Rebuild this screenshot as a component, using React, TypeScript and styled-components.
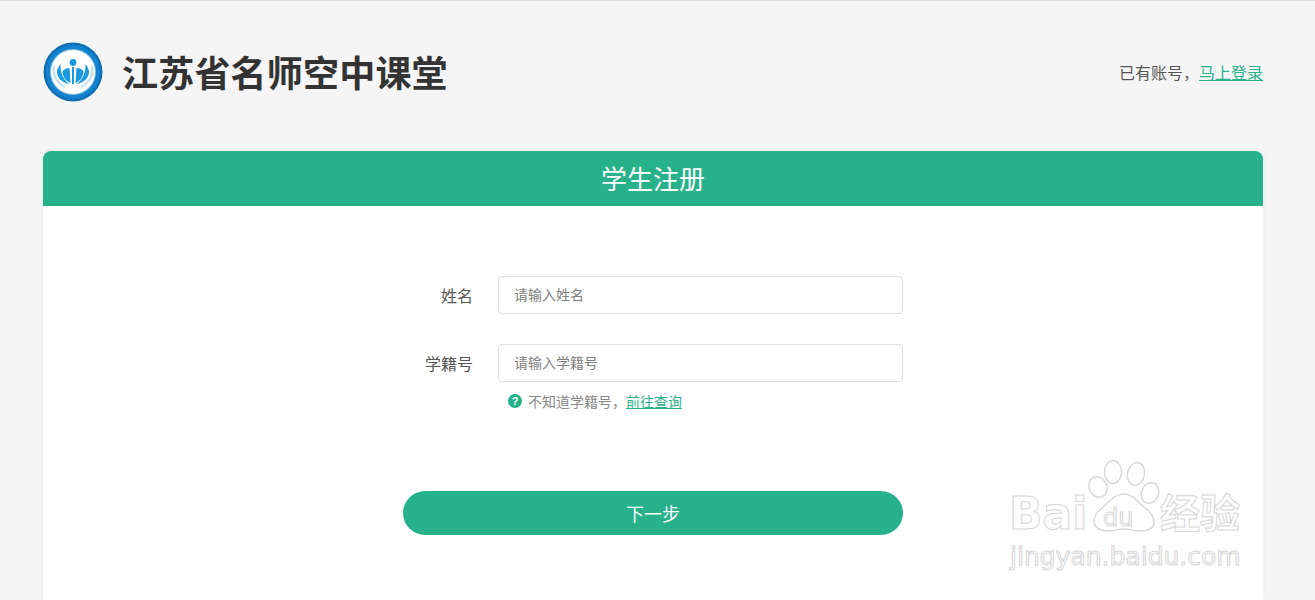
import styled, { createGlobalStyle } from 'styled-components';

const GlobalStyle = createGlobalStyle`
  html, body {
    margin: 0;
    padding: 0;
    height: 600px;
    overflow: hidden;
    background: #f5f5f5;
  }
  * {
    box-sizing: border-box;
  }
  body {
    font-family: "Liberation Sans", "Noto Sans CJK SC", sans-serif;
    color: #555;
  }
`;

const Page = styled.div`
  position: relative;
  height: 600px;
  padding: 0 52px 0 43px;
  border-top: 1px solid #dcdcdc;
  overflow: hidden;
`;

const Top = styled.header`
  display: flex;
  align-items: center;
  justify-content: space-between;
  height: 150px;
  padding-bottom: 6px;
`;

const Brand = styled.div`
  display: flex;
  align-items: center;
  gap: 19px;
`;

const LogoMark = styled.svg`
  margin-top: -2px;
`;

const BrandName = styled.h1`
  margin: 0;
  padding-top: 3px;
  font-size: 36px;
  line-height: 50px;
  letter-spacing: 0.2px;
  font-weight: 700;
  color: #333;
`;

const LoginTip = styled.div`
  font-size: 16px;
  color: #555;
  padding-bottom: 3px;
`;

const GreenLink = styled.a`
  color: #28b28b;
  text-decoration: underline;
`;

const Card = styled.main`
  background: #fff;
  height: 449px;
  border-radius: 8px 8px 0 0;
  box-shadow: 0 0 4px rgba(0, 0, 0, 0.06);
`;

const CardTitle = styled.h2`
  margin: 0;
  height: 55px;
  line-height: 59px;
  text-align: center;
  font-size: 26px;
  font-weight: 400;
  color: #fff;
  background: #28b28b;
  border-radius: 8px 8px 0 0;
`;

const Form = styled.form`
  width: 500px;
  margin: 70px auto 0 360px;
  display: flex;
  flex-direction: column;
`;

const Row = styled.div`
  display: flex;
  align-items: center;
  gap: 25px;
  margin-bottom: 30px;
`;

const Label = styled.label`
  width: 70px;
  text-align: right;
  font-size: 16px;
  color: #555;
`;

const Input = styled.input`
  width: 405px;
  height: 38px;
  padding: 0 15px;
  border: 1px solid #dcdfe6;
  border-radius: 4px;
  background: #fff;
  font-family: inherit;
  font-size: 14px;
  outline: none;

  &::placeholder {
    color: #808080;
    opacity: 1;
  }
`;

const Hint = styled.div`
  display: flex;
  align-items: center;
  gap: 6px;
  margin: -21px 0 0 105px;
  height: 20px;
  font-size: 14px;
  color: #888;
`;

const HelpDot = styled.span`
  width: 14px;
  height: 14px;
  border-radius: 50%;
  background: #28b28b;
  color: #fff;
  font-size: 11px;
  font-weight: 700;
  line-height: 14px;
  text-align: center;
`;

const NextButton = styled.button`
  width: 500px;
  height: 44px;
  margin-top: 80px;
  border: none;
  border-radius: 22px;
  background: #28b28b;
  color: #fff;
  font-family: inherit;
  font-size: 18px;
`;

const Watermark = styled.div`
  position: absolute;
  left: 1008px;
  top: 459px;
  width: 240px;
  height: 112px;
  pointer-events: none;
`;

const MarkWord = styled.span<{ $left: number; $top: number; $size: number; $bold?: boolean }>`
  position: absolute;
  left: ${(p) => p.$left}px;
  top: ${(p) => p.$top}px;
  font-family: "DejaVu Sans", "Noto Sans CJK SC", sans-serif;
  font-size: ${(p) => p.$size}px;
  line-height: 1;
  font-weight: ${(p) => (p.$bold ? 700 : 400)};
  white-space: nowrap;
  color: #fff;
  -webkit-text-stroke: 1px #d6d6d6;
`;

const PawIcon = styled.svg`
  position: absolute;
  left: 72px;
  top: 0;
`;

function Logo() {
  return (
    <LogoMark width="60" height="60" viewBox="0 0 60 60">
      <circle cx="30" cy="30" r="29.5" fill="#0f6fb5" />
      <circle cx="30" cy="30" r="27" fill="#1483cf" />
      <circle cx="30" cy="30" r="23" fill="#8cc6ea" />
      <circle cx="30" cy="30" r="22" fill="#fff" />
      <path d="M11 24c-2 9 3 17 11 21M49 24c2 9-3 17-11 21" fill="none" stroke="#bfdff3" strokeWidth="2" />
      <circle cx="30" cy="20.500" r="3.400" fill="#1a9be0" />
      <path d="M29 25h2v17h-2z" fill="#1a9be0" />
      <path d="M27.500 41c-.5-5-.5-11-1-15-3 0-5 1-7 3 0 5 3 10 8 12z" fill="#1a9be0" />
      <path d="M32.500 41c.5-5 .5-11 1-15 3 0 5 1 7 3 0 5-3 10-8 12z" fill="#1a9be0" />
      <path d="M17.500 22c-2 3-3.500 5-3.500 8 0 6 6 11 12 12-5-4-9-11-8.500-20z" fill="#1a9be0" />
      <path d="M42.500 22c2 3 3.500 5 3.500 8 0 6-6 11-12 12 5-4 9-11 8.500-20z" fill="#1a9be0" />
    </LogoMark>
  );
}

function Paw() {
  return (
    <PawIcon width="92" height="76" viewBox="0 0 92 76" fill="#fff" stroke="#d6d6d6" strokeWidth="1.4">
      <ellipse cx="18" cy="27" rx="9" ry="10.500" transform="rotate(-25 18 27)" />
      <ellipse cx="33" cy="12" rx="8.500" ry="11.500" />
      <ellipse cx="56" cy="14" rx="8.500" ry="11.500" transform="rotate(12 56 14)" />
      <ellipse cx="70" cy="33" rx="8.500" ry="10.500" transform="rotate(20 70 33)" />
      <path d="M44 34c9 0 13 8 21 14 11 8 15 23-6 23-6 0-10-2-15-2s-9 2-15 2c-19 0-18-14-7-23 8-6 12-14 22-14z" />
    </PawIcon>
  );
}

export default function App() {
  return (
    <>
      <GlobalStyle />
      <Page>
        <Top>
          <Brand>
            <Logo />
            <BrandName>江苏省名师空中课堂</BrandName>
          </Brand>
          <LoginTip>
            已有账号，<GreenLink href="#">马上登录</GreenLink>
          </LoginTip>
        </Top>
        <Card>
          <CardTitle>学生注册</CardTitle>
          <Form>
            <Row>
              <Label>姓名</Label>
              <Input placeholder="请输入姓名" />
            </Row>
            <Row>
              <Label>学籍号</Label>
              <Input placeholder="请输入学籍号" />
            </Row>
            <Hint>
              <HelpDot>?</HelpDot>
              <span>
                不知道学籍号，<GreenLink href="#">前往查询</GreenLink>
              </span>
            </Hint>
            <NextButton type="button">下一步</NextButton>
          </Form>
        </Card>
        <Watermark>
          <Paw />
          <MarkWord $left={1} $top={32} $size={44} $bold>
            Bai
          </MarkWord>
          <MarkWord $left={95} $top={46} $size={24}>
            du
          </MarkWord>
          <MarkWord $left={152} $top={34} $size={40} $bold>
            经验
          </MarkWord>
          <MarkWord $left={2} $top={84} $size={25}>
            jingyan.baidu.com
          </MarkWord>
        </Watermark>
      </Page>
    </>
  );
}
